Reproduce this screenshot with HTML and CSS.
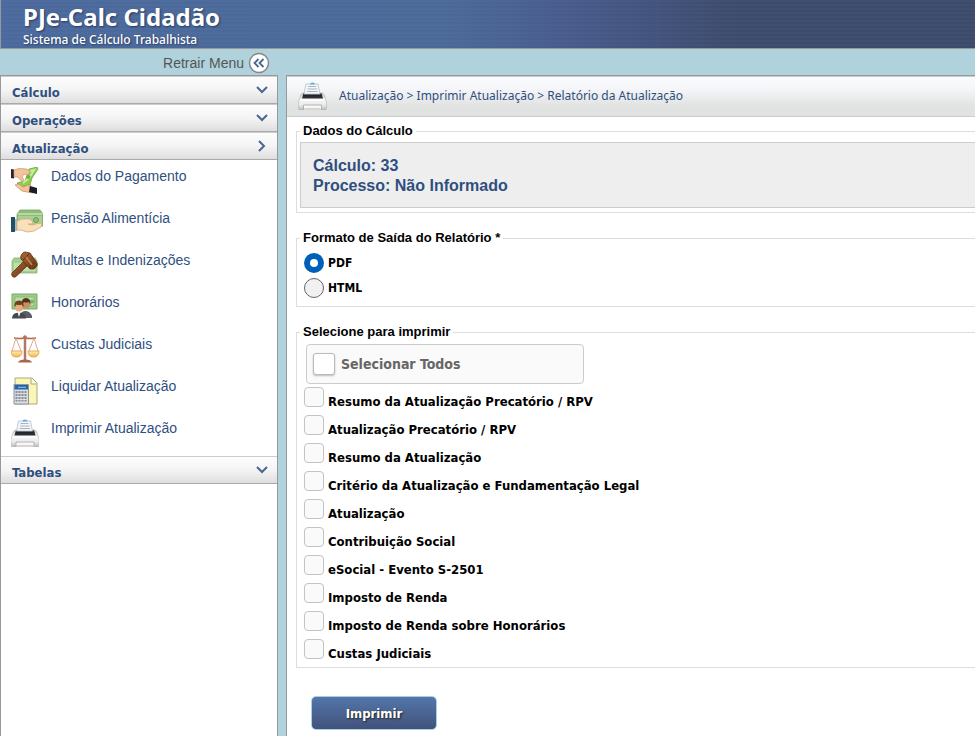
FILE: index.html
```html
<!DOCTYPE html>
<html lang="pt-BR">
<head>
<meta charset="utf-8">
<title>PJe-Calc Cidadão</title>
<link rel="stylesheet" href="styles.css">
</head>
<body>
<svg class="defs" aria-hidden="true">
  <defs>
    <linearGradient id="printer-body" x1="0" y1="0" x2="0" y2="1"><stop offset="0" stop-color="#c6c6c6"/><stop offset=".4" stop-color="#f4f4f4"/><stop offset=".7" stop-color="#ececec"/><stop offset="1" stop-color="#b8b8b8"/></linearGradient>
    <linearGradient id="band" x1="0" y1="0" x2="0" y2="1"><stop offset="0" stop-color="#6a6e73"/><stop offset=".4" stop-color="#1f2226"/><stop offset="1" stop-color="#34383c"/></linearGradient>
    <linearGradient id="wood" x1="0" y1="0" x2="1" y2="1"><stop offset="0" stop-color="#a9683a"/><stop offset="1" stop-color="#6b3413"/></linearGradient>
    <linearGradient id="gold" x1="0" y1="0" x2="0" y2="1"><stop offset="0" stop-color="#fff0b8"/><stop offset="1" stop-color="#f3b548"/></linearGradient>
    <symbol id="printer" viewBox="0 0 28 28">
      <path d="M4 11Q2 12 1.500 15L0 20v6.500Q0 28 1.500 28h25q1.500 0 1.500-1.500V20l-1.500-5Q26 12 24 11z" fill="url(#printer-body)" stroke="#b5b5b5" stroke-width=".6"/>
      <path d="M5 11h18l1.500 5.500h-21z" fill="url(#band)"/>
      <path d="M7.500 2h12l2 10h-16z" fill="#f4f7fa" stroke="#b5bfca" stroke-width=".8"/>
      <path d="M11.500 2.500q0-2 2.500-2t2.500 2z" fill="#5fb1e3"/>
      <path d="M9.500 4.500h8M9 7h9.500M8.500 9.500h10.500" stroke="#aab4c0" stroke-width="1"/>
      <path d="M2 18h24" stroke="#fff" stroke-width="1.500"/>
      <path d="M5 28v-5h18v5z" fill="#f7f7f7" stroke="#a5a5a5" stroke-width=".8"/>
      <path d="M6 26.500h16" stroke="#d5d5d5"/>
    </symbol>
  </defs>
</svg>

<header class="banner">
  <h1 class="brand">PJe-Calc Cidadão</h1>
  <p class="tagline">Sistema de Cálculo Trabalhista</p>
</header>

<div class="layout">
  <div class="sidebar">
    <button class="collapse" type="button">Retrair Menu
      <svg class="collapse-icon" viewBox="0 0 22 22" aria-hidden="true"><circle cx="11" cy="11" r="9.500" fill="#fff" stroke="#888" stroke-width="1.500"/><path d="M10.500 7L6.500 11l4 4M15.500 7l-4 4 4 4" fill="none" stroke="#4a678f" stroke-width="1.800"/></svg>
    </button>
    <nav class="menu" aria-label="Menu">
      <button class="section" type="button">Cálculo<svg class="chevron" viewBox="0 0 12 12" aria-hidden="true"><path d="M1 3l5 5 5-5"/></svg></button>
      <button class="section" type="button">Operações<svg class="chevron" viewBox="0 0 12 12" aria-hidden="true"><path d="M1 3l5 5 5-5"/></svg></button>
      <button class="section" type="button" aria-expanded="true">Atualização<svg class="chevron" viewBox="0 0 12 12" aria-hidden="true"><path d="M3 1l5 5-5 5"/></svg></button>
      <ul class="items">
        <li><a class="item" href="#pagamento"><svg class="item-icon" viewBox="0 0 32 28" aria-hidden="true">
          <path d="M18 2l8-2 1 2-6 9-2 7-9 2-4-4 8-2z" fill="#8fce50" stroke="#5f9f33" stroke-width=".7"/>
          <path d="M19 4l4-1-5 8-6 5" fill="none" stroke="#c9eba0" stroke-width="2"/><circle cx="17.500" cy="10" r="2" fill="#6fb53a"/>
          <path d="M0 2l3 .5v9L0 11z" fill="#25252b"/><path d="M3 3l5-1.500 8 .5 3 3-2 3-4-1-2 3 2 3-2 2-4-5-4 0z" fill="#f3c49c" stroke="#cc9167" stroke-width=".7"/>
          <path d="M4 18l4-1 4 3 5-2 3 0-2 3 3 0 3 2-2 3-6-1-5-1z" fill="#f3c49c" stroke="#c98a5d" stroke-width=".7"/><path d="M19 19l7 2v6l-8-2z" fill="#1d1d22"/>
        </svg>Dados do Pagamento</a></li>
        <li><a class="item" href="#pensao"><svg class="item-icon" viewBox="0 0 32 28" aria-hidden="true">
          <path d="M9 1h20l3 4v12H6V5z" fill="#8fbd78" stroke="#76a361" stroke-width=".8"/><path d="M6.500 5h25" stroke="#c5e0b6" stroke-width="1.500"/><path d="M7 7h24v10H7z" fill="#a9d092"/><circle cx="25" cy="11" r="2.500" fill="#8fbb79" stroke="#6e9c59"/>
          <path d="M0 8h4v15H0z" fill="#244f62"/><path d="M4 10h2v12H4z" fill="#9dbfc9"/>
          <path d="M6 12l5-2 8 0 3 3-1 2-4 0 4 1 8-2 2 1-1 3-7 4-7 1-6-2-4 0z" fill="#fae0ba" stroke="#cfa879" stroke-width=".8"/>
        </svg>Pensão Alimentícia</a></li>
        <li><a class="item" href="#multas"><svg class="item-icon" viewBox="0 0 32 28" aria-hidden="true">
          <path d="M3 7h21l2 3v12H1V10z" fill="#a5cf90" stroke="#88b172" stroke-width=".8"/><path d="M3 12h21v8H3z" fill="#bfdfae"/>
          <path d="M1 22L13 10l4 4L5 25.500q-2 1.500-3.500 0T1 22z" fill="url(#wood)" stroke="#5b2d0f" stroke-width=".8"/>
          <path d="M11 3q1-2 3-2l5 1 7 10q1 3-1 4l-2 2-4 0L10 8q-1-3 1-5z" fill="url(#wood)" stroke="#5b2d0f" stroke-width=".8"/><path d="M12 9l6-6M18 16l6-5" stroke="#5f2f12" stroke-width="1"/><path d="M15 6l6 8" stroke="#c18656" stroke-width="1.500"/>
        </svg>Multas e Indenizações</a></li>
        <li><a class="item" href="#honorarios"><svg class="item-icon" viewBox="0 0 32 28" aria-hidden="true">
          <path d="M1 1h25v15H1z" fill="#9fcb86" stroke="#79a964"/><path d="M4 4h19v9H4z" fill="#bddda9" stroke="#86b571" stroke-width=".8"/><circle cx="21" cy="8.500" r="2" fill="#7bb064"/>
          <path d="M9 25q0-7 5-7t7 5v2z" fill="#5b5f65"/><circle cx="15" cy="11.500" r="4" fill="#c88f62"/><path d="M11 12q-1-7 4-7 5 0 4.500 7l-1.500-3q-3 1-5 0z" fill="#54301a"/>
          <path d="M1 25.500q0-6 7-6t7 6z" fill="#44494f"/><path d="M6.500 19l1.500 5 1.500-5z" fill="#fff"/><circle cx="8" cy="14.500" r="4" fill="#e3ad7b"/><path d="M3.500 14.500q-1-7 4.500-7 5.500 0 4.500 7l-2-3q-3 1-5 0z" fill="#6f4020"/>
        </svg>Honorários</a></li>
        <li><a class="item" href="#custas"><svg class="item-icon" viewBox="0 0 32 28" aria-hidden="true">
          <path d="M3 3q5 1 11 0 6 1 11 0" fill="none" stroke="#b06c4c" stroke-width="1.300"/><path d="M14 1v24" stroke="#b07a60" stroke-width="2.500"/><circle cx="14" cy="2" r="1.800" fill="#b37250"/>
          <path d="M5 3L1 16M5 3l5 13M23 3l-5 13M23 3l4 13" fill="none" stroke="#d9a183" stroke-width=".9"/>
          <path d="M0 16h11q0 6-5.500 6T0 16zM17 16h11q0 6-5.500 6T17 16z" fill="url(#gold)" stroke="#e0a04c" stroke-width=".9"/><path d="M7 27.500q1-3 7-3t7 3z" fill="#a7664b"/>
        </svg>Custas Judiciais</a></li>
        <li><a class="item" href="#liquidar"><svg class="item-icon" viewBox="0 0 32 28" aria-hidden="true">
          <path d="M4 1h17l5 5v21H4z" fill="#faf7b5" stroke="#a9a68a"/><path d="M20 1.500v5.500h5.500" fill="#fdfce0" stroke="#a9a68a"/>
          <path d="M3 7.500h14.500V27H3z" fill="#dcdee1" stroke="#8d949b"/><path d="M3.500 8h13.500v4.500H3.500z" fill="#2465ae"/><path d="M7 10.300h8" stroke="#9cc3ea"/>
          <path d="M5.500 14v10.500M8.500 14v10.500M11.500 14v10.500M14.500 14v10.500" stroke="#858d96" stroke-width="2" stroke-dasharray="2 1"/>
        </svg>Liquidar Atualização</a></li>
        <li><a class="item" href="#imprimir"><svg class="item-icon" viewBox="0 0 32 28" aria-hidden="true"><use href="#printer" width="28" height="28"/></svg>Imprimir Atualização</a></li>
      </ul>
      <button class="section" type="button">Tabelas<svg class="chevron" viewBox="0 0 12 12" aria-hidden="true"><path d="M1 3l5 5 5-5"/></svg></button>
    </nav>
  </div>

  <main class="content">
    <div class="crumbs"><svg class="crumb-icon" aria-hidden="true"><use href="#printer"/></svg><span>Atualização &gt; Imprimir Atualização &gt; Relatório da Atualização</span></div>
    <form class="form">
      <fieldset class="group">
        <legend>Dados do Cálculo</legend>
        <div class="summary"><p>Cálculo: 33</p><p>Processo: Não Informado</p></div>
      </fieldset>
      <fieldset class="group format">
        <legend>Formato de Saída do Relatório *</legend>
        <label class="radio"><input type="radio" name="formato" checked>PDF</label>
        <label class="radio"><input type="radio" name="formato">HTML</label>
      </fieldset>
      <fieldset class="group reports">
        <legend>Selecione para imprimir</legend>
        <label class="select-all"><input type="checkbox">Selecionar Todos</label>
        <label class="check"><input type="checkbox"><span>Resumo da Atualização Precatório / RPV</span></label>
        <label class="check"><input type="checkbox"><span>Atualização Precatório / RPV</span></label>
        <label class="check"><input type="checkbox"><span>Resumo da Atualização</span></label>
        <label class="check"><input type="checkbox"><span>Critério da Atualização e Fundamentação Legal</span></label>
        <label class="check"><input type="checkbox"><span>Atualização</span></label>
        <label class="check"><input type="checkbox"><span>Contribuição Social</span></label>
        <label class="check"><input type="checkbox"><span>eSocial - Evento S-2501</span></label>
        <label class="check"><input type="checkbox"><span>Imposto de Renda</span></label>
        <label class="check"><input type="checkbox"><span>Imposto de Renda sobre Honorários</span></label>
        <label class="check"><input type="checkbox"><span>Custas Judiciais</span></label>
      </fieldset>
      <button class="submit" type="button">Imprimir</button>
    </form>
  </main>
</div>
</body>
</html>
```
FILE: styles.css
```css
* { box-sizing: border-box; }
html { height: 100%; }
body {
  margin: 0;
  min-height: 100%;
  display: flex;
  flex-direction: column;
  background: #b0d2dc;
  font-family: "Liberation Sans", Arial, sans-serif;
  overflow-x: hidden;
}
p, h1, ul { margin: 0; padding: 0; }
ul { list-style: none; }
button { font: inherit; cursor: pointer; }
input { appearance: none; margin: 0; flex: none; }
.defs { position: absolute; width: 0; height: 0; }

.banner {
  height: 49px;
  padding: 2px 22px 0;
  border-left: 1px solid #999;
  border-bottom: 1px solid #999;
  background:
    repeating-linear-gradient(rgba(255, 255, 255, 0.02) 0 2px, transparent 2px 4px),
    linear-gradient(90deg, #4b699c 0, #4b6a98 45%, #47598a 60%, #3c4b6b 76%);
  color: #fff;
  font-family: "Noto Sans", sans-serif;
  text-shadow: 1px 1px 2px #26395e;
}
.brand { font-size: 24px; line-height: 30px; font-weight: 700; }
.tagline { font-size: 12px; line-height: 15px; font-weight: 500; }

.layout { flex: 1; display: flex; gap: 8px; }
.sidebar { flex: 0 0 278px; display: flex; flex-direction: column; }
.collapse {
  height: 26px;
  display: flex;
  align-items: center;
  justify-content: flex-end;
  gap: 4px;
  padding: 1px 8px 0;
  border: 0;
  background: none;
  color: #555;
  font-size: 14px;
}
.collapse-icon { width: 22px; height: 22px; }
.menu {
  flex: 1;
  background: #fff;
  border: 1px solid #999;
  border-bottom: 0;
}
.section {
  width: 100%;
  height: 28px;
  display: flex;
  align-items: center;
  justify-content: space-between;
  padding: 4px 9px 0 11px;
  border: 0;
  border-top: 1px solid #ccc;
  border-bottom: 1px solid #aaa;
  background: linear-gradient(#fdfdfd, #f4f4f4 50%, #dedede);
  color: #2f4f7f;
  font: 700 13px "DejaVu Sans Condensed", "DejaVu Sans", sans-serif;
}
.chevron { width: 12px; height: 12px; margin-bottom: 4px; fill: none; stroke: #4a678f; stroke-width: 2; }
.items { padding-bottom: 2px; }
.item {
  height: 42px;
  display: flex;
  align-items: flex-start;
  gap: 8px;
  padding: 7px 10px 0;
  color: #2f4f7f;
  font-size: 14px;
  line-height: 18px;
  text-decoration: none;
}
.item-icon { width: 32px; height: 28px; flex: none; }

.content {
  flex: 1;
  min-width: 0;
  margin-top: 26px;
  background: #fff;
  border-top: 1px solid #999;
  border-left: 1px solid #999;
}
.crumbs {
  height: 41px;
  display: flex;
  align-items: center;
  gap: 12px;
  padding: 0 0 2px 11px;
  border-top: 1px solid #ccc;
  border-bottom: 1px solid #ccc;
  background: linear-gradient(#fafbfd, #f5f6f9 30%, #e1e3e2 75%);
  color: #2f4f7f;
  font: 12px "Noto Sans", sans-serif;
}
.crumb-icon { width: 29px; height: 28px; }
.form { padding: 6px 0 4px 9px; }
.group {
  min-width: 0;
  margin: 0 0 17px;
  padding: 3px 0 4px 3px;
  border: 1px solid #ddd;
  border-right: 0;
}
.group legend { padding: 0 3px; font-size: 13px; line-height: 16px; font-weight: 700; }
.summary {
  padding: 13px 12px 11px;
  border: 1px solid #ccc;
  border-right: 0;
  background: #eee;
  color: #2f4f7f;
  font-size: 16px;
  line-height: 20px;
  font-weight: 700;
}
.format { padding: 4px 7px 6px; }
.format legend, .reports legend { margin-left: -4px; }
.radio {
  height: 25px;
  display: flex;
  align-items: center;
  gap: 4px;
  font: 700 12px "DejaVu Sans Condensed", "DejaVu Sans", sans-serif;
}
.radio input {
  width: 20px;
  height: 20px;
  border: 1px solid #666;
  border-radius: 50%;
  background: #f1f1f1;
}
.radio input:checked { border: 6px solid #005fb8; background: #fff; }
.reports { padding: 4px 7px 0; }
.select-all {
  width: 278px;
  height: 40px;
  display: flex;
  align-items: center;
  gap: 6px;
  margin: 0 0 3px 2px;
  padding: 0 6px;
  border: 1px solid #ccc;
  border-radius: 4px;
  background: #fafafa;
  color: #666;
  font: 700 14px "DejaVu Sans Condensed", "DejaVu Sans", sans-serif;
}
.select-all input {
  width: 22px;
  height: 22px;
  border: 1px solid #bbb;
  border-radius: 3px;
  background: #fff;
  box-shadow: 0 1px 2px #bbb;
}
.check {
  height: 28px;
  display: flex;
  align-items: flex-start;
  gap: 4px;
  font: 700 13px/16px "DejaVu Sans Condensed", "DejaVu Sans", sans-serif;
}
.check span { padding-top: 7px; }
.check input {
  width: 20px;
  height: 20px;
  border: 1px solid #c4c4c4;
  border-radius: 4px;
  background: #fafafa;
}
.submit {
  width: 126px;
  height: 34px;
  display: block;
  margin: 28px 0 0 15px;
  border: 1px solid #a7d0e6;
  border-radius: 5px;
  background: linear-gradient(#5276ab, #42527a);
  color: #fff;
  font: 700 13px "DejaVu Sans Condensed", "DejaVu Sans", sans-serif;
  text-shadow: 1px 1px 2px #222;
}
```
